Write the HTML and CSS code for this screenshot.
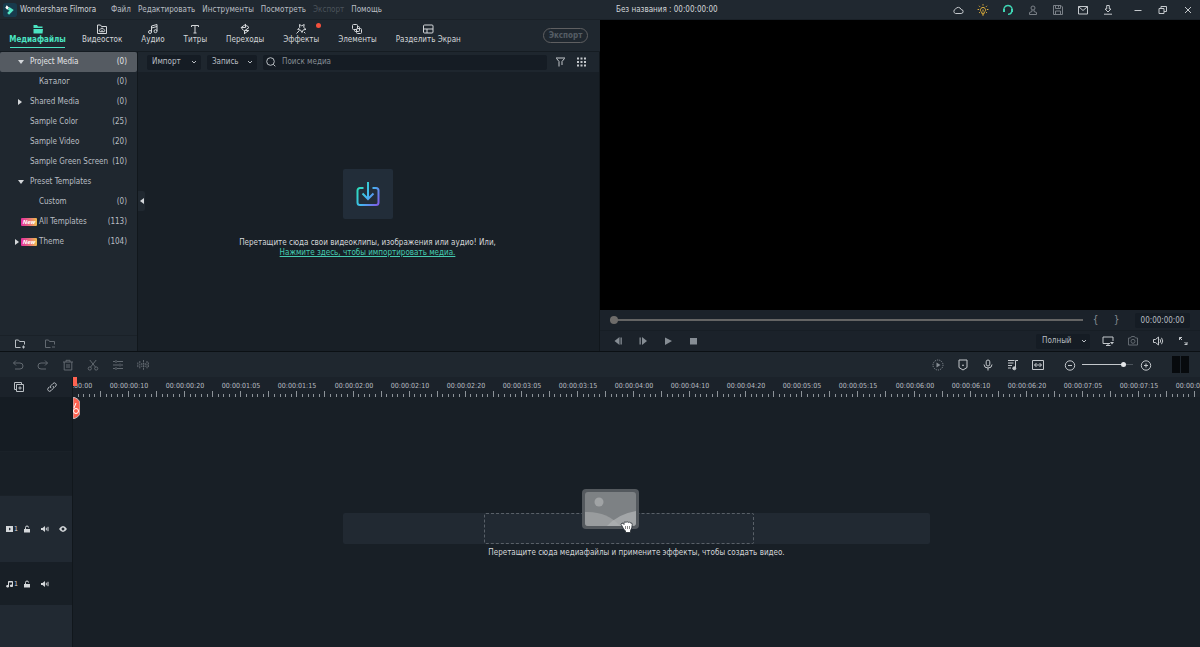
FILE: index.html
```html
<!DOCTYPE html>
<html lang="ru">
<head>
<meta charset="utf-8">
<title>Wondershare Filmora</title>
<link rel="stylesheet" href="styles.css">
</head>
<body>
<header class="titlebar">
  <svg class="logo" viewBox="0 0 15 15"><rect width="15" height="15" rx="3" fill="#173a4c"/><path d="M4 2.5 6.5 5 4.5 7.2 2.5 5z" fill="#fff"/><path d="M6.8 4.2 11.5 7.5 6.5 12.5 4.5 10.8 7 8 5 7.5z" fill="#55e6c5"/></svg>
  <span class="brand">Wondershare Filmora</span>
  <nav class="menu">
    <button>Файл</button><button>Редактировать</button><button>Инструменты</button><button>Посмотреть</button><button disabled>Экспорт</button><button>Помощь</button>
  </nav>
  <span class="project">Без названия : 00:00:00:00</span>
  <div class="sys">
    <button aria-label="Облако"><svg viewBox="0 0 12 12"><path d="M3.5 9.5a2.3 2.3 0 0 1 0-4.4 3 3 0 0 1 5.6.4 2 2 0 0 1 0 4z"/></svg></button>
    <button class="gold" aria-label="Подсказки"><svg viewBox="0 0 12 12"><path d="M4.7 8.3a2.6 2.6 0 1 1 2.6 0v1H4.7zM5 10.9h2M6 5.6v2M6 .2v1.3M2 1.8l1 1M10 1.8l-1 1M.6 5.5h1.5M9.9 5.5h1.5M2 9l.9-.8M10 9l-.9-.8"/></svg></button>
    <button class="mint" aria-label="Поддержка"><svg viewBox="0 0 12 12"><path d="M2.2 7.5a4.200 4.200 0 1 1 7.6 0c-.3 1.500-1.500 2.800-3.800 2.800" stroke-width="1.300"/><path d="M2 5v3M10 5v3" stroke-width="2"/></svg></button>
    <button class="dim" aria-label="Аккаунт"><svg viewBox="0 0 12 12"><circle cx="6" cy="4" r="2"/><path d="M5 6v1.500L2.500 8.500v2h7v-2L7 7.500V6"/></svg></button>
    <button class="dim" aria-label="Сохранить"><svg viewBox="0 0 12 12"><path d="M1.500 1.500h7.500l1.500 1.500v7.500h-9zM3.500 1.500v3h5v-3M3.500 10.500V7h5v3.500M6.500 2v1.500"/></svg></button>
    <button aria-label="Сообщения"><svg viewBox="0 0 12 12"><path d="M1.500 2.500h9v7.500h-9zM1.500 2.500 6 6.500l4.500-4"/></svg></button>
    <button aria-label="Загрузки"><svg viewBox="0 0 12 12"><path d="M4.700 1.500h2.600V5H9L6 8 3 5h1.700zM2 10.200h8"/></svg></button>
    <button class="min" aria-label="Свернуть"><svg viewBox="0 0 12 12"><path d="M2.500 6.500h7"/></svg></button>
    <button aria-label="Развернуть"><svg viewBox="0 0 12 12"><path d="M2 4.500h5v5H2zM4 4.500v-2h5.500v5H7"/></svg></button>
    <button aria-label="Закрыть"><svg viewBox="0 0 12 12"><path d="m3 3 6 6M9 3 3 9"/></svg></button>
  </div>
</header>

<main class="workspace">
  <section class="library">
    <nav class="tabs">
      <button class="tab active"><svg viewBox="0 0 12 12"><path d="M1.500 2h3.500l1 1.500h4.500V5h-9zM1.500 6h9.500l-.5 4.500h-9z" fill="currentColor" stroke="none"/></svg>Медиафайлы</button>
      <button class="tab"><svg viewBox="0 0 12 12"><path d="M1.500 2h3l1 1.500h5v7h-9zM4 8.700a1.200 1.200 0 0 1 .3-2.300 1.800 1.800 0 0 1 3.400 0A1.200 1.200 0 0 1 8 8.700zM6 6.700v2"/></svg>Видеосток</button>
      <button class="tab"><svg viewBox="0 0 12 12"><path d="M4.500 9V3l5.500-1.500v6.500M4.500 5 10 3.500"/><circle cx="3" cy="9" r="1.500"/><circle cx="8.500" cy="8.200" r="1.500"/></svg>Аудио</button>
      <button class="tab"><svg viewBox="0 0 12 12"><path d="M2.500 4V2.500h7V4M6 2.500v7.500M4.500 10h3"/></svg>Титры</button>
      <button class="tab"><svg viewBox="0 0 12 12"><path d="M6.500 1v3.500H2.200L6.800 1.200M6.500 2.800h1.500L10 4.500 5.500 7.800M5.500 11V7.500H9.800L5.200 10.800M2.200 4.500 4.500 7.500"/></svg>Переходы</button>
      <button class="tab fx"><svg viewBox="0 0 12 12"><path d="M4.500 1.500l2.200 1.300L9.200 1.500l-.5 2.900 2.300 2-2.800.5-1.200 2.600L5.500 7 2.700 6.500 4.700 4.500zM4.500 7.500l-3 3M9 9l1.300 1.300"/></svg>Эффекты</button>
      <button class="tab"><svg viewBox="0 0 12 12"><rect x="1.500" y="1.500" width="5" height="5" rx="1"/><path d="M6.500 3.500h1a1 1 0 0 1 1 1v3a1 1 0 0 1-1 1h-3a1 1 0 0 1-1-1v-1"/><rect x="5.500" y="5.500" width="5" height="5" rx="1"/></svg>Элементы</button>
      <button class="tab wide"><svg viewBox="0 0 12 12"><rect x="1.500" y="2" width="9.500" height="8" rx="1"/><path d="M1.500 6H11M5 6v4"/></svg>Разделить Экран</button>
      <button class="export" disabled>Экспорт</button>
    </nav>
    <div class="media">
      <aside class="side">
        <ul class="tree">
          <li><button class="row sel"><i class="arr down"></i><span>Project Media</span><b>(0)</b></button></li>
          <li><button class="row sub"><span>Каталог</span><b>(0)</b></button></li>
          <li><button class="row"><i class="arr right"></i><span>Shared Media</span><b>(0)</b></button></li>
          <li><button class="row"><span>Sample Color</span><b>(25)</b></button></li>
          <li><button class="row"><span>Sample Video</span><b>(20)</b></button></li>
          <li><button class="row"><span>Sample Green Screen</span><b>(10)</b></button></li>
          <li><button class="row"><i class="arr down"></i><span>Preset Templates</span></button></li>
          <li><button class="row sub"><span>Custom</span><b>(0)</b></button></li>
          <li><button class="row tagged"><em>New</em><span>All Templates</span><b>(113)</b></button></li>
          <li><button class="row tagged"><i class="arr right"></i><em>New</em><span>Theme</span><b>(104)</b></button></li>
        </ul>
        <div class="folders">
          <button aria-label="Новая папка"><svg viewBox="0 0 12 12"><path d="M6.500 9.500h-5v-7.500h3l1 1.500h5V6.500M9.500 7.500v3M8 9h3"/></svg></button>
          <button class="dim" aria-label="Удалить папку"><svg viewBox="0 0 12 12"><path d="M6.500 9.500h-5v-7.500h3l1 1.500h5V6.500M8 9h3"/></svg></button>
        </div>
      </aside>
      <div class="browser">
        <div class="filters">
          <button class="drop">Импорт<svg viewBox="0 0 8 8"><path d="m2 3 2 2 2-2"/></svg></button>
          <button class="drop">Запись<svg viewBox="0 0 8 8"><path d="m2 3 2 2 2-2"/></svg></button>
          <label class="search"><svg viewBox="0 0 12 12"><circle cx="5.500" cy="5.500" r="3.800"/><path d="m8.300 8.300 2 2"/></svg><input type="text" placeholder="Поиск медиа" aria-label="Поиск медиа"></label>
          <button class="ico" aria-label="Фильтр"><svg viewBox="0 0 12 12"><path d="M1 2h9M1.500 2.500 4 5.500v5M9.500 2.500 7 5.500V9"/></svg></button>
          <button class="ico" aria-label="Сетка"><svg viewBox="0 0 12 12"><path d="M1 2.500h9M1 6h9M1 9.500h9" stroke-width="2" stroke-dasharray="2 1.500"/></svg></button>
        </div>
        <div class="drop-area">
          <div class="tile"><svg viewBox="0 0 24 26"><defs><linearGradient id="g" gradientUnits="userSpaceOnUse" x1="1" y1="6" x2="23" y2="20"><stop offset="0" stop-color="#2be0b4"/><stop offset=".5" stop-color="#42b8f0"/><stop offset="1" stop-color="#7a63e8"/></linearGradient></defs><path d="M7.500 7H4a2.500 2.500 0 0 0-2.500 2.500v12A2.500 2.500 0 0 0 4 24h16a2.500 2.500 0 0 0 2.500-2.500v-12A2.500 2.500 0 0 0 20 7h-3.500M12 1v17M6.500 12.500 12 18l5.500-5.500" stroke="url(#g)"/></svg></div>
          <p>Перетащите сюда свои видеоклипы, изображения или аудио! Или,<br><a href="#">Нажмите здесь, чтобы импортировать медиа.</a></p>
        </div>
        <button class="collapse" aria-label="Скрыть панель"><i class="arr left"></i></button>
      </div>
    </div>
  </section>

  <section class="preview">
    <div class="screen"></div>
    <div class="scrub">
      <input class="seek" type="range" value="0" aria-label="Позиция">
      <button class="brace">{</button><button class="brace">}</button>
      <output class="code">00:00:00:00</output>
    </div>
    <div class="transport">
      <button aria-label="Кадр назад"><svg viewBox="0 0 12 12" class="solid"><path d="M7.500 2v8L2.500 6zM8.500 2.500h1.300v7H8.500z"/></svg></button>
      <button aria-label="Кадр вперед"><svg viewBox="0 0 12 12" class="solid"><path d="M2.500 2.500h1.300v7H2.500zM5 2v8l5-4z"/></svg></button>
      <button aria-label="Воспроизвести"><svg viewBox="0 0 12 12" class="solid"><path d="M3 2.500v7.500L10 6z"/></svg></button>
      <button aria-label="Стоп"><svg viewBox="0 0 12 12" class="solid"><path d="M3 3h7v6.500H3z"/></svg></button>
      <div class="quality"><select aria-label="Качество"><option>Полный</option></select><svg viewBox="0 0 8 8"><path d="m2 3 2 2 2-2"/></svg></div>
      <button class="lit" aria-label="Экран"><svg viewBox="0 0 12 12"><path d="M8 8.500H1v-6.500h10v4M6 8.500v2M4 10.500h4.500"/><path d="M8 7h4l-2 2.500z" fill="currentColor" stroke="none"/></svg></button>
      <button class="dim" aria-label="Снимок"><svg viewBox="0 0 12 12"><path d="M1.500 3h2l1-1.500h3L8.500 3h2v7h-9z"/><circle cx="6" cy="6.300" r="2"/></svg></button>
      <button class="lit" aria-label="Звук"><svg viewBox="0 0 12 12"><path d="M1.500 4.500h2L6.500 2v8l-3-2.500h-2zM8 4.200q1.500 1.800 0 3.600M9.500 2.800q2.500 3.200 0 6.400"/></svg></button>
      <button class="lit" aria-label="Во весь экран"><svg viewBox="0 0 12 12"><path d="M2.500 5V2.500H5M2.500 2.500l2.500 2.500M10 7v2.500H7.500M10 9.500 7.500 7"/></svg></button>
    </div>
  </section>
</main>

<div class="tools">
  <button class="dim" aria-label="Отменить"><svg viewBox="0 0 12 12"><path d="M4 1.500 1.500 4 4 6.500M1.500 4H8a2.800 2.800 0 0 1 0 6H3"/></svg></button>
  <button class="dim" aria-label="Повторить"><svg viewBox="0 0 12 12"><path d="M8 1.500 10.500 4 8 6.500M10.500 4H4a2.800 2.800 0 0 0 0 6h5"/></svg></button>
  <button class="dim" aria-label="Удалить"><svg viewBox="0 0 12 12"><path d="M1 3h10M4 3V1.300h4V3M2.200 3v8h7.600V3M5 5v4M7 5v4"/></svg></button>
  <button class="dim" aria-label="Разрезать"><svg viewBox="0 0 12 12"><circle cx="2.800" cy="9.500" r="1.600"/><circle cx="9.200" cy="9.500" r="1.600"/><path d="M3.600 8 9.200 1M8.400 8 2.800 1"/></svg></button>
  <button class="dim" aria-label="Параметры"><svg viewBox="0 0 12 12"><path d="M1 2.500h2M5 2.500h6M4 1v3M1 6h6M9 6h2M8 4.500v3M1 9.500h2M5 9.500h6M4 8v3"/></svg></button>
  <button class="dim" aria-label="Звуковая волна"><svg viewBox="0 0 12 12"><path d="M.8 3.500v5M2.800 2v8M4.800 4v4M6.500 1v10M8.200 4v4M10 2v8M11.600 3.500v5" stroke-dasharray="2 .6"/></svg></button>
  <span class="space"></span>
  <button aria-label="Рендер"><svg viewBox="0 0 12 12"><circle cx="6" cy="6" r="5" stroke-dasharray="1.200 1"/><path d="M4.500 3.500v5L8.500 6z" fill="currentColor" stroke="none"/></svg></button>
  <button class="lit" aria-label="Маркер"><svg viewBox="0 0 12 12"><path d="M2 1h8v7.500L6 11 2 8.500z"/><path d="M6 5 7 7H5z" fill="currentColor" stroke="none"/></svg></button>
  <button class="lit" aria-label="Микрофон"><svg viewBox="0 0 12 12"><rect x="4.200" y="1" width="3.600" height="6" rx="1.800"/><path d="M2 5.500a4 3.500 0 0 0 8 0M6 9v2.500"/></svg></button>
  <button class="lit" aria-label="Музыка"><svg viewBox="0 0 12 12"><path d="M1 1.500h6.500M1 4h5.500M1 6.500h4M1 9h3M8.500 9V1.500H11"/><circle cx="7.300" cy="9.300" r="1.500" fill="currentColor"/></svg></button>
  <button class="lit" aria-label="По ширине"><svg viewBox="0 0 12 12"><path d="M.5 1.500h11v9H.5zM2.500 6h7M4.500 4 2.500 6l2 2M7.500 4l2 2-2 2"/></svg></button>
  <div class="zoom">
    <button class="lit" aria-label="Уменьшить"><svg viewBox="0 0 12 12"><circle cx="6" cy="6.500" r="4.700"/><path d="M4 6.500h4"/></svg></button>
    <input type="range" value="84" aria-label="Масштаб">
    <button class="lit" aria-label="Увеличить"><svg viewBox="0 0 12 12"><circle cx="6" cy="6.500" r="4.700"/><path d="M4 6.500h4M6 4.500v4"/></svg></button>
  </div>
  <div class="meter"><i></i><i></i></div>
</div>

<section class="timeline">
  <aside class="heads">
    <div class="corner">
      <button aria-label="Добавить дорожку"><svg viewBox="0 0 12 12"><path d="M3 8.500H1.500v-7h7V3M3.500 3.500h7v7h-7zM7 5.300v3.400M5.300 7h3.400"/></svg></button>
      <button aria-label="Связать"><svg viewBox="0 0 12 12"><path d="M5 7.200a2 2 0 0 1 0-2.700l2-2a1.900 1.900 0 0 1 2.700 2.700L8.500 6.500M7 5a2 2 0 0 1 0 2.700l-2 2a1.900 1.900 0 0 1-2.700-2.700L3.500 5.700"/></svg></button>
    </div>
    <div class="head blank"></div>
    <div class="head blank low"></div>
    <div class="head video">
      <span class="kind"><svg viewBox="0 0 8 8" class="solid"><path fill-rule="evenodd" d="M1 1h7v6H1zM4 2.500v3L6 4z"/></svg>1</span>
      <button aria-label="Замок"><svg viewBox="0 0 8 8"><path d="M2.500 4V2.500a1.500 1.500 0 0 1 3 0"/><path d="M1 4h6v3.500H1z" fill="currentColor" stroke="none"/></svg></button>
      <button aria-label="Звук"><svg viewBox="0 0 8 8"><path d="M0 3h1.500L4 1v6L1.500 5H0z" fill="currentColor" stroke="none"/><path d="M5.300 2.700v2.600M7 1.800v4.400"/></svg></button>
      <button aria-label="Видимость"><svg viewBox="0 0 8 8" class="solid"><path fill-rule="evenodd" d="M0 4q4-6 8 0-4 6-8 0zM4 2.600a1.400 1.400 0 1 0 .01 0z"/></svg></button>
    </div>
    <div class="head audio">
      <span class="kind"><svg viewBox="0 0 8 8"><path d="M3.500 6.500v-5h4v4.500M3.500 2h4"/><path d="M1.800 5.500h1.700V7H1.800zM5.500 5h2v1.500h-2z" fill="currentColor"/></svg>1</span>
      <button aria-label="Замок"><svg viewBox="0 0 8 8"><path d="M2.500 4V2.500a1.500 1.500 0 0 1 3 0"/><path d="M1 4h6v3.500H1z" fill="currentColor" stroke="none"/></svg></button>
      <button aria-label="Звук"><svg viewBox="0 0 8 8"><path d="M0 3h1.500L4 1v6L1.500 5H0z" fill="currentColor" stroke="none"/><path d="M5.300 2.700v2.600M7 1.800v4.400"/></svg></button>
    </div>
    <div class="head rest"></div>
  </aside>
  <div class="canvas">
    <div class="ruler" id="ruler"></div>
    <div class="lanes">
      <div class="hint">
        <div class="strip"><div class="slot"></div>
          <svg class="thumb" viewBox="0 0 60 48"><rect x="1" y="1" width="57" height="40" rx="4" fill="#54595e"/><rect x="4" y="4" width="51" height="34" rx="3" fill="#7d8184"/><circle cx="18" cy="14" r="4.500" fill="#a0a3a5"/><path d="M4 24q22-1 35 14H7q-3 0-3-3z" fill="#999c9e"/><path d="M55 23q-18 3-29 15h26q3 0 3-3z" fill="#b0b3b4" fill-opacity=".75"/><path d="M41 38q-2-2 0-3 1 0 2 1.500v-2q1-1.500 2 0 1-2 2.200 0 1.300-1.500 2.200.5 1.800-.5 1.800 1.500 0 4-1.700 6v2h-5v-1.500q-2-1.500-3.500-5z" fill="#fff" stroke="#20262c" stroke-width=".8"/><path d="M44.500 38v3M46.500 38v3M48.500 38v3" stroke="#555" stroke-width=".7"/></svg>
        </div>
        <p>Перетащите сюда медиафайлы и примените эффекты, чтобы создать видео.</p>
      </div>
    </div>
    <div class="playhead"><i></i><svg viewBox="0 0 7 22"><path d="M0 0q7 2 7 7v8q0 5-7 7z" fill="#ff6250"/><path d="M3 6 1 11" stroke="#fff" fill="none"/><circle cx="3" cy="14" r="2.500" fill="none" stroke="#fff"/></svg></div>
  </div>
</section>
<script src="ruler.js"></script>
</body>
</html>
```
FILE: styles.css
```css
* { box-sizing: border-box; }
body {
  margin: 0;
  height: 100vh;
  display: grid;
  grid-template-rows: 20px minmax(0, 332fr) 25px minmax(0, 270fr);
  background: #181f26;
  color: #b9bec3;
  font: 8px/10px "DejaVu Sans Condensed", "Noto Sans", sans-serif;
  overflow: hidden;
}
button, input, select {
  font: inherit; color: inherit; background: none; border: 0; padding: 0; margin: 0;
}
button { display: flex; align-items: center; justify-content: center; white-space: nowrap; }
svg { width: 12px; height: 12px; fill: none; stroke: currentColor; display: block; flex: none; }
svg.solid { fill: currentColor; stroke: none; }
p, ul { margin: 0; padding: 0; list-style: none; }
.dim { color: #626970; }
.lit { color: #c4c8cc; }

/* title bar */
.titlebar { display: flex; align-items: center; background: #202830; padding: 0 0 0 3px; border-bottom: 1px solid #1a2128; position: relative; }
.logo { width: 14px; height: 14px; stroke: none; }
.brand { margin-left: 3px; color: #d4d7da; width: 91px; }
.menu { display: flex; gap: 7px; }
.menu button:disabled { color: #4b535b; }
.project { position: absolute; left: 50%; padding-left: 16px; color: #d4d7da; }
.sys { margin-left: auto; display: flex; }
.sys button { width: 25px; color: #c4c8cc; }
.sys .gold { color: #e0b03c; }
.sys .mint { color: #3fd6b4; }
.sys .dim { color: #7a8087; }
.sys .min { margin-left: 5px; }

/* workspace */
.workspace { display: grid; grid-template-columns: 1fr 1fr; min-height: 0; border-bottom: 1px solid #0b1014; }
.library { display: flex; flex-direction: column; min-width: 0; background: #1f272f; }
.tabs { display: flex; align-items: center; height: 32px; padding: 0 12px 0 10px; gap: 19px; color: #d4d7da; border-bottom: 1px solid #151c22; }
.tab { flex-direction: column; height: 100%; justify-content: flex-start; padding-top: 3px; position: relative; }
.tab.active { color: #4be3c1; font-weight: 700; width: 55px; margin-right: -2px; }
.tab.active::after { content: ""; position: absolute; left: 0; right: 0; bottom: 3px; height: 1px; background: #4be3c1; }
.tab.fx::after { content: ""; position: absolute; right: -2px; top: 3px; width: 5px; height: 5px; border-radius: 50%; background: #f4503c; }
.export { margin-left: auto; height: 15px; width: 45px; border: 1px solid #5f5f61; border-radius: 8px; color: #555d65; font-weight: 700; }
.media { flex: 1; display: flex; min-height: 0; }
.side { width: 138px; display: flex; flex-direction: column; border-right: 1px solid #11171c; }
.row { width: 100%; height: 20px; padding: 0 10px 0 30px; position: relative; justify-content: flex-start; }
.row b { margin-left: auto; font-weight: 400; }
.row.sel { background: #555b62; color: #e4e6e8; border-radius: 2px; }
.row.sub { padding-left: 39px; }
.row.tagged { padding-left: 21px; gap: 2px; }
.row em { width: 16px; height: 8px; border-radius: 1px; background: linear-gradient(90deg, #e42f9e, #e86c7c, #edbd4c); color: #fff; font: italic 700 6px/8px "Noto Sans", sans-serif; text-align: center; }
.arr { width: 0; height: 0; border: 3px solid transparent; }
.row .arr { position: absolute; left: 18px; }
.row.tagged .arr { left: 15px; }
.arr.down { border-top: 4px solid #d4d7da; border-bottom: 0; }
.arr.right { border-left: 4px solid #d4d7da; border-right: 0; }
.arr.left { border-right: 4px solid #d4d7da; border-left: 0; }
.folders { margin-top: auto; height: 16px; display: flex; align-items: center; gap: 18px; padding-left: 14px; border-top: 1px solid #1a2128; color: #b9bec3; }
.browser { flex: 1; min-width: 0; background: #181f26; display: flex; flex-direction: column; position: relative; border-right: 1px solid #11171c; }
.filters { height: 20px; display: flex; align-items: center; background: #1e262e; padding: 0 10px 0 9px; gap: 6px; }
.drop { height: 15px; width: 54px; background: #151c24; border-radius: 2px; justify-content: space-between; padding: 0 3px 0 5px; }
.drop + .drop { width: 50px; }
.drop svg, .quality svg { width: 8px; height: 8px; }
.search { flex: 1; height: 15px; display: flex; align-items: center; gap: 5px; padding-left: 2px; background: #151c24; border-radius: 2px; }
.search input { flex: 1; min-width: 0; outline: 0; }
.search input::placeholder { color: #868d94; opacity: 1; }
.ico { width: 15px; color: #c4c8cc; }
.drop-area { flex: 1; display: flex; flex-direction: column; align-items: center; justify-content: center; text-align: center; gap: 19px; color: #d4d7da; padding: 4px 2px 0 0; }
.tile { width: 50px; height: 50px; background: #222d39; border-radius: 2px; display: grid; place-items: center; }
.tile svg { width: 24px; height: 26px; stroke-width: 2; }
.drop-area a { color: #45cbb0; }
.collapse { position: absolute; left: 0; top: 139px; width: 7px; height: 20px; background: #202830; border-radius: 0 2px 2px 0; }

/* preview */
.preview { display: flex; flex-direction: column; background: #1b222a; min-width: 0; }
.screen { flex: 1; background: #000; }
.scrub { height: 21px; display: flex; align-items: center; padding: 0 10px; border-bottom: 1px solid #171e25; }
.brace { width: 21px; color: #868d94; font-size: 10px; }
.code { width: 55px; height: 15px; line-height: 15px; text-align: center; margin-left: 8px; background: #151c24; border-radius: 2px; }
input[type=range] { appearance: none; height: 8px; min-width: 0; }
.seek { flex: 1; background: linear-gradient(#646464, #646464) center / 100% 2px no-repeat; margin-right: 2px; }
.seek::-webkit-slider-thumb { appearance: none; width: 8px; height: 8px; border-radius: 50%; background: #6e6c6a; }
.transport { height: 20px; display: flex; align-items: center; padding: 0 5px; color: #868d94; }
.transport button { width: 25px; }
.quality { margin: 0 5px 0 auto; width: 54px; height: 15px; position: relative; display: flex; align-items: center; background: #151c24; border-radius: 2px; color: #b9bec3; }
.quality select { appearance: none; width: 100%; height: 15px; padding-left: 6px; }
.quality svg { position: absolute; right: 2px; pointer-events: none; }

/* toolbar */
.tools { display: flex; align-items: center; background: #1f272f; padding: 0 11px 0 5px; }
.tools button { width: 25px; color: #868d94; }
.tools .dim { color: #626970; }
.tools .lit { color: #c4c8cc; }
.space { flex: 1; }
.zoom { display: flex; align-items: center; margin: 0 14px 0 7px; }
.zoom input { width: 51px; background: linear-gradient(90deg, #c4c8cc 80%, #4b535b 80%) center / 100% 1px no-repeat; }
.zoom input::-webkit-slider-thumb { appearance: none; width: 5px; height: 5px; border-radius: 50%; background: #e4e6e8; }
.meter { display: flex; gap: 1px; }
.meter i { width: 8px; height: 17px; background: #070a0d; }

/* timeline */
.timeline { display: flex; min-height: 0; }
.heads { width: 72px; display: flex; flex-direction: column; color: #d4d7da; }
.corner { height: 20px; display: flex; align-items: center; background: #1b222a; gap: 21px; padding-left: 13px; color: #b9bec3; }
.head { display: flex; align-items: center; padding-left: 5px; }
.head svg { width: 8px; height: 8px; }
.head button { width: 18px; }
.blank { height: 55px; background: #151c23; border-bottom: 1px solid #1a2128; }
.low { height: 44px; background: #181f26; }
.video { height: 66px; background: #212932; }
.audio { height: 43px; background: #181f26; }
.rest { flex: 1; background: #212932; }
.kind { display: flex; align-items: center; gap: 1px; width: 13px; font-size: 7px; }
.canvas { flex: 1; min-width: 0; position: relative; display: flex; flex-direction: column; overflow: hidden; border-left: 1px solid #11171c; }
.ruler { height: 20px; background: #1b222a; position: relative; font-size: 7px; }
.ruler span { position: absolute; top: 4px; transform: translateX(-50%); white-space: nowrap; }
.ruler svg { width: 100%; height: 20px; stroke: #8d9399; }
.lanes { flex: 1; display: flex; flex-direction: column; justify-content: center; align-items: center; padding-top: 27px; }
.hint { width: 52%; text-align: center; color: #d4d7da; }
.strip { height: 31px; background: #212932; border-radius: 2px; position: relative; margin-bottom: 4px; }
.slot { margin-left: 24%; width: 46%; height: 31px; border: 1px dashed #596068; border-radius: 2px; }
.thumb { position: absolute; left: calc(50% - 56px); bottom: 8px; width: 60px; height: 48px; stroke: none; }
.playhead { position: absolute; left: -1px; top: 0; bottom: 0; border-left: 1px solid #c24b40; }
.playhead i { display: block; width: 4px; height: 9px; background: #ff6250; }
.playhead svg { position: absolute; top: 20px; left: 0; width: 7px; height: 22px; stroke-width: 1; }
```
FILE: ruler.js
```js
const ruler = document.getElementById('ruler');
const last = 20, step = 56.1;
const pad = n => String(n).padStart(2, '0');
const frameLabel = f => `00:00:${pad(Math.floor(f / 25))}:${pad(f % 25)}`;

let ticks = '';
for (let i = 0; i * step / 10 < 2400; i++) {
  const x = Math.round(i * step / 10) - 0.5;
  ticks += `M${x} ${i % 5 ? 17 : 14}V20`;
}
ruler.innerHTML = `<svg><path d="${ticks}"/></svg>`;

for (let i = 0; i <= last; i++) {
  const label = document.createElement('span');
  label.textContent = frameLabel(i * 10);
  label.style.left = `${Math.round(i * step)}px`;
  ruler.append(label);
}
```
